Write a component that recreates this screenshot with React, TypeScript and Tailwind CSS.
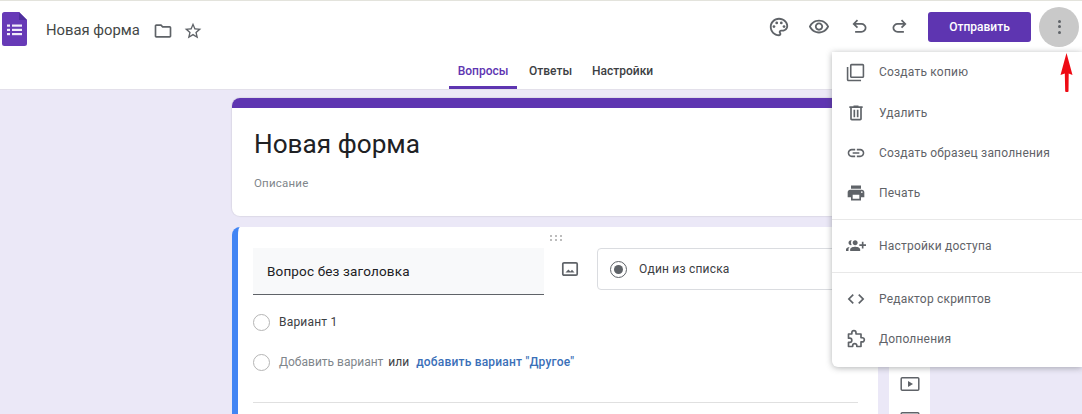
import React from 'react';

type IconProps = { d: string; size?: number; className?: string; flip?: boolean };

function Icon({ d, size = 24, className = '', flip = false }: IconProps) {
  return (
    <svg width={size} height={size} viewBox="0 0 24 24" fill="currentColor" className={className}>
      <path d={d} transform={flip ? 'matrix(-1 0 0 1 24 0)' : undefined} />
    </svg>
  );
}

const paths = {
  folder: 'M20 6h-8l-2-2H4c-1.1 0-1.99.9-1.99 2L2 18c0 1.1.9 2 2 2h16c1.1 0 2-.9 2-2V8c0-1.1-.9-2-2-2zm0 12H4V6h5.17l2 2H20v10z',
  star: 'M22 9.24l-7.19-.62L12 2 9.19 8.63 2 9.24l5.46 4.73L5.82 21 12 17.27 18.18 21l-1.63-7.03L22 9.24zM12 15.4l-3.76 2.27 1-4.28-3.32-2.88 4.38-.38L12 6.1l1.71 4.04 4.38.38-3.32 2.88 1 4.28L12 15.4z',
  eye: 'M12 6c3.79 0 7.17 2.13 8.82 5.5C19.17 14.87 15.79 17 12 17s-7.17-2.13-8.82-5.5C4.83 8.13 8.21 6 12 6m0-2C7 4 2.73 7.11 1 11.5 2.73 15.89 7 19 12 19s9.27-3.11 11-7.5C21.27 7.11 17 4 12 4zm0 5c1.38 0 2.5 1.12 2.5 2.5S13.38 14 12 14s-2.5-1.12-2.5-2.5S10.62 9 12 9m0-2c-2.48 0-4.5 2.02-4.5 4.5S9.52 16 12 16s4.5-2.02 4.5-4.5S14.48 7 12 7z',
  undo: 'M7 19v-2h7.1q1.575 0 2.738-1 1.162-1 1.162-2.5T16.838 11q-1.163-1-2.738-1H7.8l2.6 2.6L9 14 4 9l5-5 1.4 1.4L7.8 8h6.3q2.425 0 4.163 1.575Q20 11.15 20 13.5t-1.737 3.925Q16.525 19 14.1 19Z',
  copy: 'M3 5H1v16c0 1.1.9 2 2 2h16v-2H3V5zm18-4H7c-1.1 0-2 .9-2 2v14c0 1.1.9 2 2 2h14c1.1 0 2-.9 2-2V3c0-1.1-.9-2-2-2zm0 16H7V3h14v14z',
  trash: 'M15 4V3H9v1H4v2h1v13c0 1.1.9 2 2 2h10c1.1 0 2-.9 2-2V6h1V4h-5zm2 15H7V6h10v13zM9 8h2v9H9zm4 0h2v9h-2z',
  link: 'M3.9 12c0-1.71 1.39-3.1 3.1-3.1h4V7H7c-2.76 0-5 2.24-5 5s2.24 5 5 5h4v-1.9H7c-1.71 0-3.1-1.39-3.1-3.1zM8 13h8v-2H8v2zm9-6h-4v1.9h4c1.71 0 3.1 1.39 3.1 3.1s-1.39 3.1-3.1 3.1h-4V17h4c2.76 0 5-2.24 5-5s-2.24-5-5-5z',
  print: 'M19 8H5c-1.66 0-3 1.34-3 3v6h4v4h12v-4h4v-6c0-1.66-1.34-3-3-3zm-3 11H8v-5h8v5zm3-7c-.55 0-1-.45-1-1s.45-1 1-1 1 .45 1 1-.45 1-1 1zm-1-9H6v4h12V3z',
  people: 'M8 10H5V7H3v3H0v2h3v3h2v-3h3v-2zm10 1c1.66 0 2.99-1.34 2.99-3S19.66 5 18 5c-.32 0-.63.05-.91.14.57.81.9 1.79.9 2.86s-.34 2.04-.9 2.86c.28.09.59.14.91.14zm-5 0c1.66 0 2.99-1.34 2.99-3S14.66 5 13 5s-3 1.34-3 3 1.34 3 3 3zm6.62 2.16c.83.73 1.38 1.66 1.38 2.84v2h3v-2c0-1.54-2.37-2.49-4.38-2.84zM13 13c-2 0-6 1-6 3v2h12v-2c0-2-4-3-6-3z',
  code: 'M9.4 16.6L4.8 12l4.6-4.6L8 6l-6 6 6 6 1.4-1.4zm5.2 0l4.6-4.6-4.6-4.6L16 6l6 6-6 6-1.4-1.4z',
};

function PaletteIcon() {
  return (
    <svg width="22" height="22" viewBox="0 0 24 24" fill="currentColor">
      <path d="M12 22C6.49 22 2 17.51 2 12S6.49 2 12 2s10 4.04 10 9c0 3.31-2.69 6-6 6h-1.77c-.28 0-.5.22-.5.5 0 .12.05.23.13.33.41.47.64 1.06.64 1.67 0 1.38-1.12 2.5-2.5 2.5zm0-18c-4.41 0-8 3.59-8 8s3.59 8 8 8c.28 0 .5-.22.5-.5 0-.16-.08-.28-.14-.35-.41-.46-.63-1.05-.63-1.65 0-1.38 1.12-2.5 2.5-2.5H16c2.21 0 4-1.79 4-4 0-3.86-3.59-7-8-7z" />
      <circle cx="6.5" cy="11.5" r="1.5" />
      <circle cx="9.5" cy="7.5" r="1.5" />
      <circle cx="14.5" cy="7.5" r="1.5" />
      <circle cx="17.5" cy="11.5" r="1.5" />
    </svg>
  );
}

function ImageIcon() {
  return (
    <svg width="18" height="18" viewBox="0 0 18 18" fill="none">
      <rect x="1.8" y="2.8" width="14.4" height="12.4" rx="1.2" stroke="#5f6368" strokeWidth="1.7" />
      <path d="M4.5 12.6 7.4 9.4l2 2 1.6-1.6 2.5 2.8z" fill="#5f6368" />
    </svg>
  );
}

function VideoIcon() {
  return (
    <svg width="20" height="16" viewBox="0 0 20 16" fill="none">
      <rect x="1.2" y="1.8" width="17.6" height="12.4" rx="1" stroke="#5f6368" strokeWidth="1.5" />
      <path d="M8 5l5 3-5 3z" fill="#5f6368" />
    </svg>
  );
}

function FormsLogo() {
  return (
    <svg width="25" height="34" viewBox="0 0 25 34">
      <path d="M2.5 0H17l8 8v23.500a2.500 2.500 0 0 1-2.500 2.500h-20A2.500 2.500 0 0 1 0 31.500V2.500A2.500 2.500 0 0 1 2.500 0z" fill="#673ab7" />
      <path d="M17 0l8 8h-8z" fill="#4f2f9e" />
      <g fill="#f1ecf9">
        <rect x="5" y="12.500" width="3" height="2.200" />
        <rect x="10" y="12.500" width="10" height="2.200" />
        <rect x="5" y="16.800" width="3" height="2.200" />
        <rect x="10" y="16.800" width="10" height="2.200" />
        <rect x="5" y="21" width="3" height="2.200" />
        <rect x="10" y="21" width="10" height="2.200" />
      </g>
    </svg>
  );
}

function MenuRow({ icon, label }: { icon: React.ReactNode; label: string }) {
  return (
    <div className="flex h-10 items-center">
      <div className="flex w-[47px] justify-center text-[#5f6368]">{icon}</div>
      <span className="text-[12px] tracking-[0.2px] text-[#5f6368]">{label}</span>
    </div>
  );
}

function Radio() {
  return <span className="h-[17px] w-[17px] shrink-0 rounded-full border-[1.5px] border-[#b5b5b5]" />;
}

export default function App() {
  return (
    <div className="relative flex h-[414px] w-[1082px] flex-col overflow-hidden bg-[#ebe8f7] font-['Roboto',sans-serif]">
      <header className="flex h-[90px] shrink-0 flex-col border-t border-b border-t-[#e3e3dc] border-b-[#e3e0ea] bg-white">
        <div className="flex h-[51px] items-center pl-[2px]">
          <div className="mt-[4px]"><FormsLogo /></div>
          <span className="ml-[19px] mt-[8px] text-[14.8px] text-[#444746]">Новая форма</span>
          <Icon d={paths.folder} size={20} className="ml-[13px] mt-[8px] text-[#5f6368]" />
          <Icon d={paths.star} size={20} className="ml-[10px] mt-[8px] text-[#5f6368]" />
          <div className="ml-auto flex items-center pr-[3px]">
            <div className="flex items-center text-[#5f6368]">
              <div className="flex w-10 justify-center"><PaletteIcon /></div>
              <div className="flex w-10 justify-center"><Icon d={paths.eye} size={22} /></div>
              <div className="flex w-10 justify-center"><Icon d={paths.undo} size={21} /></div>
              <div className="flex w-10 justify-center"><Icon d={paths.undo} size={21} flip /></div>
            </div>
            <button className="ml-[9px] h-[30px] w-[103px] rounded-[3px] bg-[#5e35b1] text-[12px] font-medium text-white">Отправить</button>
            <div className="ml-2 flex h-10 w-10 items-center justify-center rounded-full bg-[#c9c9c9]">
              <div className="flex flex-col gap-[2.5px]">
                <span className="h-[3px] w-[3px] rounded-full bg-[#5f6368]" />
                <span className="h-[3px] w-[3px] rounded-full bg-[#5f6368]" />
                <span className="h-[3px] w-[3px] rounded-full bg-[#5f6368]" />
              </div>
            </div>
          </div>
        </div>
        <nav className="flex h-[37px] items-stretch pl-[449px] text-[12px] font-medium text-[#3c4043]">
          <div className="flex w-[68px] items-center justify-center border-b-[3px] border-[#5e35b1] pt-[3px] text-[#5e35b1]">Вопросы</div>
          <div className="ml-[12px] flex items-center">Ответы</div>
          <div className="ml-[20px] flex items-center">Настройки</div>
        </nav>
      </header>

      <main className="flex flex-1 items-start gap-[11px] pl-[232px] pt-[8px]">
        <div className="flex w-[646px] shrink-0 flex-col gap-[11px]">
          <section className="h-[118px] overflow-hidden rounded-lg bg-white shadow-[0_0_1px_1px_rgba(60,64,67,0.08)]">
            <div className="h-[10px] bg-[#5e35b1]" />
            <h1 className="ml-[22px] mt-[18px] text-[26.2px] leading-[36px] text-[#202124]">Новая форма</h1>
            <p className="ml-[22px] mt-[13px] text-[11.5px] tracking-[0.2px] text-[#80868b]">Описание</p>
          </section>

          <section className="relative h-[220px] rounded-l-lg border-l-[6px] border-[#4285f4] bg-white pl-[15px] pr-5">
            <div className="flex justify-center pt-[7px]">
              <svg width="14" height="8" viewBox="0 0 14 8" fill="#bdbdbd">
                <rect x="1" y="1" width="2" height="2" /><rect x="6" y="1" width="2" height="2" /><rect x="11" y="1" width="2" height="2" />
                <rect x="1" y="5" width="2" height="2" /><rect x="6" y="5" width="2" height="2" /><rect x="11" y="5" width="2" height="2" />
              </svg>
            </div>
            <div className="mt-[6px] flex items-start">
              <div className="flex h-[47px] w-[291px] items-center border-b border-[#5f6368] bg-[#f8f9fa] pl-[14px] text-[13.5px] tracking-[0.15px] text-[#202124]">Вопрос без заголовка</div>
              <div className="flex h-[42px] w-[53px] items-center justify-center pr-[2px]"><ImageIcon /></div>
              <div className="flex h-[42px] flex-1 items-center rounded-[4px] border border-[#dadce0] pl-[12px]">
                <span className="flex h-[17px] w-[17px] items-center justify-center rounded-full border-[1.5px] border-[#5f6368]">
                  <span className="h-[9px] w-[9px] rounded-full bg-[#5f6368]" />
                </span>
                <span className="ml-[12px] text-[12px] tracking-[0.2px] text-[#3c4043]">Один из списка</span>
              </div>
            </div>
            <div className="mt-[18px] flex items-center gap-[9px] text-[12px] tracking-[0.2px] text-[#3c4043]">
              <Radio />
              <span>Вариант 1</span>
            </div>
            <div className="mt-[22px] flex items-center text-[12px]">
              <Radio />
              <span className="ml-[9px] text-[#80868b]">Добавить вариант</span>
              <span className="ml-[5px] text-[#3c4043]">или</span>
              <span className="ml-[7px] font-medium tracking-[0.2px] text-[#3a6fb8]">добавить вариант "Другое"</span>
            </div>
            <div className="mt-[31px] h-px bg-[#e0e0e0]" />
          </section>
        </div>

        <aside className="mt-[129px] flex h-[220px] w-[41px] shrink-0 flex-col items-center bg-white pt-[149px]">
          <VideoIcon />
          <div className="mt-[19px]"><VideoIcon /></div>
        </aside>
      </main>

      {/* dropdown over the page */}
      <div className="absolute left-[832px] top-[52px] h-[315px] w-[250px] rounded-bl-[6px] bg-white shadow-[0_1px_6px_rgba(60,64,67,0.4)]">
        <MenuRow icon={<Icon d={paths.copy} size={19} />} label="Создать копию" />
        <div className="h-px" />
        <MenuRow icon={<Icon d={paths.trash} size={20} />} label="Удалить" />
        <MenuRow icon={<Icon d={paths.link} size={20} />} label="Создать образец заполнения" />
        <MenuRow icon={<Icon d={paths.print} size={20} />} label="Печать" />
        <div className="mt-[6px] h-px bg-[#e8e8e8]" />
        <div className="mt-[6px]"><MenuRow icon={<Icon d={paths.people} size={20} flip />} label="Настройки доступа" /></div>
        <div className="mt-[6px] h-px bg-[#e8e8e8]" />
        <div className="mt-[6px]"><MenuRow icon={<Icon d={paths.code} size={20} />} label="Редактор скриптов" /></div>
        <MenuRow
          icon={
            <svg width="20" height="20" viewBox="0 0 24 24" fill="none" stroke="currentColor" strokeWidth="2" strokeLinejoin="round">
              <path d="M3 6H7V4.500a2.500 2.500 0 0 1 5 0V6H18V10.500H19.500a2.500 2.500 0 0 1 0 5H18V21H13V20a2.500 2.500 0 0 0-5 0V21H3V16H4.500a2.500 2.500 0 0 0 0-5H3Z" />
            </svg>
          }
          label="Дополнения"
        />
      </div>

      {/* red annotation arrow */}
      <svg width="16" height="42" viewBox="0 0 16 42" className="absolute left-[1059px] top-[52px]">
        <path d="M7.500 1 L13.500 23 L9.700 21.500 L9.500 39.500 Q7.800 40.500 6.200 39.500 L5.800 21.500 L1.500 23 Z" fill="#ee0a14" />
      </svg>
    </div>
  );
}
